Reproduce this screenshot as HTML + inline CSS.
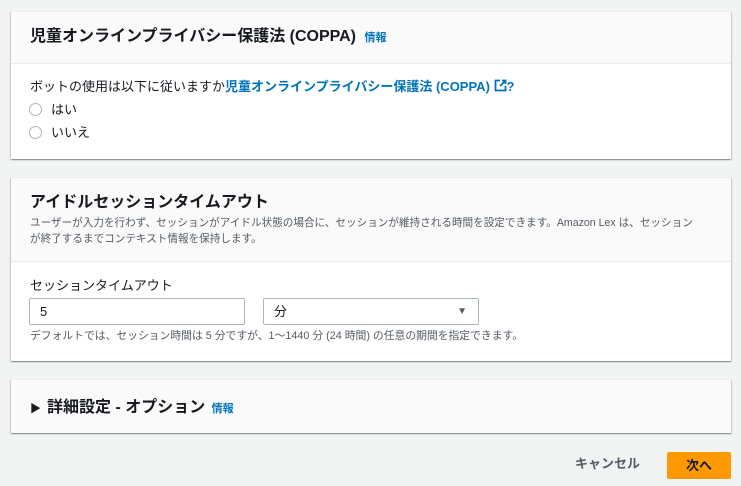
<!DOCTYPE html>
<html><head><meta charset="utf-8"><style>
*{box-sizing:border-box;margin:0;padding:0}
body{width:741px;height:486px;background:#f2f3f3;font-family:"Liberation Sans","Noto Sans CJK JP",sans-serif;color:#16191f;position:relative;overflow:hidden}
.card{position:absolute;left:11px;width:720px;background:#fff;box-shadow:0 1px 1px 0 rgba(0,28,36,.3),1px 1px 1px 0 rgba(0,28,36,.15),-1px 1px 1px 0 rgba(0,28,36,.15);border-top:1px solid #eaeded}
.hd{background:#fafafa;border-bottom:1px solid #eaeded;position:relative}
.a{position:absolute;white-space:nowrap;line-height:1.2}
.info{color:#0073bb;font-size:11px;font-weight:bold}
.radio{width:13px;height:13px;border:1px solid #aab7b8;border-radius:50%;position:absolute}
</style></head><body>
<div class="card" style="top:11px;height:148px">
 <div class="hd" style="height:52px">
  <div class="a" style="left:19px;top:15px;font-size:16px;font-weight:bold">児童オンラインプライバシー保護法 (COPPA) <span class="info" style="margin-left:4px">情報</span></div>
 </div>
 <div class="a" style="left:19px;top:67px;font-size:13px">ボットの使用は以下に従いますか<span style="color:#0073bb;font-weight:bold">児童オンラインプライバシー保護法 (COPPA) <svg width="13" height="13" viewBox="0 0 13 13" style="vertical-align:-1px"><path d="M6 1.5H1.5v10h10V7M8 1.5h3.5V5M11.5 1.5L6 7" fill="none" stroke="#0073bb" stroke-width="1.8"/></svg>?</span></div>
 <div class="radio" style="left:18px;top:91px"></div>
 <div class="a" style="left:40px;top:90px;font-size:13px">はい</div>
 <div class="radio" style="left:18px;top:114px"></div>
 <div class="a" style="left:40px;top:113px;font-size:13px">いいえ</div>
</div>
<div class="card" style="top:177px;height:184px">
 <div class="hd" style="height:84px">
  <div class="a" style="left:19px;top:15px;font-size:16px;font-weight:bold">アイドルセッションタイムアウト</div>
  <div class="a" style="left:19px;top:37px;font-size:10.6px;color:#545b64;line-height:16px;white-space:normal;width:668px">ユーザーが入力を行わず、セッションがアイドル状態の場合に、セッションが維持される時間を設定できます。Amazon Lex は、セッションが終了するまでコンテキスト情報を保持します。</div>
 </div>
 <div class="a" style="left:19px;top:100px;font-size:13px">セッションタイムアウト</div>
 <div class="a" style="left:18px;top:120px;width:216px;height:27px;border:1px solid #aab7b8;border-radius:2px;font-size:13px;padding:5px 10px">5</div>
 <div class="a" style="left:252px;top:120px;width:216px;height:27px;border:1px solid #aab7b8;border-radius:2px;font-size:13px;padding:5px 10px">分<span style="position:absolute;right:11px;top:7px;font-size:10px;color:#545b64">▼</span></div>
 <div class="a" style="left:19px;top:152px;font-size:10.8px;color:#545b64">デフォルトでは、セッション時間は 5 分ですが、1～1440 分 (24 時間) の任意の期間を指定できます。</div>
</div>
<div class="card" style="top:379px;height:54px;background:#fafafa">
 <div class="a" style="left:19px;top:18px;font-size:16px;font-weight:bold"><span style="font-size:11px;margin-right:6px">▶</span>詳細設定 - オプション <span class="info" style="margin-left:2px">情報</span></div>
</div>
<div class="a" style="left:575px;top:456px;font-size:13px;font-weight:bold;color:#545b64">キャンセル</div>
<div class="a" style="left:667px;top:452px;width:64px;height:27px;background:#ff9900;border-radius:2px;font-size:13px;font-weight:bold;text-align:center;line-height:27px">次へ</div>
</body></html>
